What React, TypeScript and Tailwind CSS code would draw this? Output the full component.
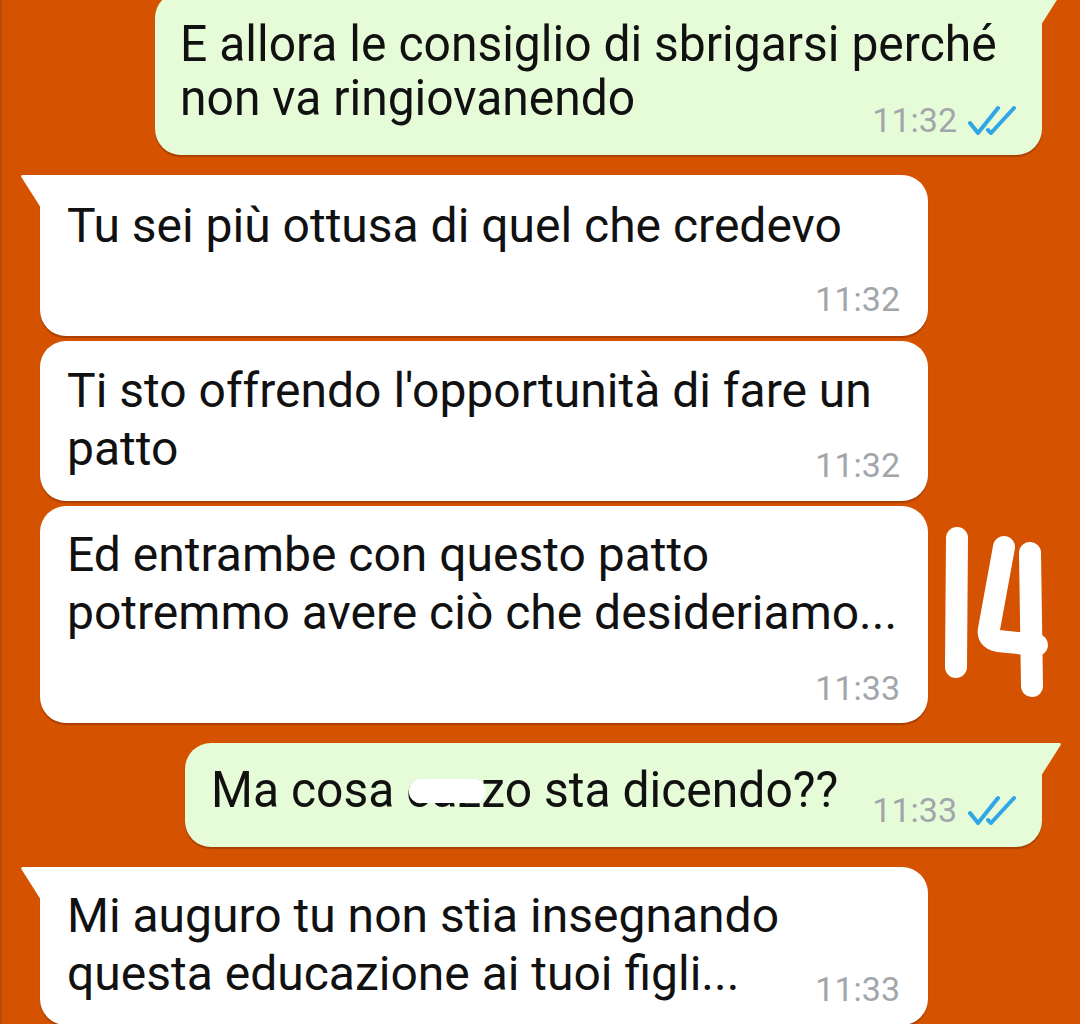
const sentLine = "font-['Roboto',sans-serif] text-[50px] leading-[54px] text-[#111] whitespace-nowrap origin-left scale-x-[0.96]"
const inLine = "font-['Roboto',sans-serif] text-[48px] leading-[58px] text-[#111] whitespace-nowrap"

function Ticks() {
  return (
    <svg width="50" height="30" viewBox="0 0 50 30" fill="none" stroke="#2fa6e6" strokeWidth="4" strokeLinecap="round" strokeLinejoin="round">
      <path d="M3 18 L11 28 L31 3" />
      <path d="M21 25 L24 28 L47 3" />
    </svg>
  )
}

function Time({ t, read, className = "" }: { t: string; read?: boolean; className?: string }) {
  return (
    <div className={`flex items-center gap-[10px] shrink-0 ${className}`}>
      <span className="font-['Roboto',sans-serif] text-[34px] leading-[40px] text-[#a2a6aa]">{t}</span>
      {read && <Ticks />}
    </div>
  )
}

function TailLeft() {
  return (
    <svg className="absolute left-[-20px] top-0" width="21" height="33" viewBox="0 0 21 33">
      <path d="M21 0 H3 Q0 0 1.8 2.8 L21 33 Z" fill="#ffffff" />
    </svg>
  )
}

function TailRight({ fill }: { fill: string }) {
  return (
    <svg className="absolute right-[-20px] top-0" width="21" height="33" viewBox="0 0 21 33">
      <path d="M0 0 H18 Q21 0 19.2 2.8 L0 33 Z" fill={fill} />
    </svg>
  )
}

const bubbleShadow = "shadow-[0_2px_1px_rgba(90,30,0,0.35)]"

export default function App() {
  return (
    <div className="relative w-[1080px] h-[1024px] overflow-hidden bg-[#d45200] border-l-2 border-[#b84a12]">
      <div className="flex flex-col">
        {/* sent 1 */}
        <div className={`relative self-end mr-[38px] mt-[-8px] w-[887px] rounded-[26px] rounded-tr-none bg-[#e6fcd8] pl-[25px] pr-[25px] pt-[25px] pb-[15px] ${bubbleShadow}`}>
          <TailRight fill="#e6fcd8" />
          <div className={sentLine}>E allora le consiglio di sbrigarsi perché</div>
          <div className="flex items-start justify-between">
            <div className={sentLine}>non va ringiovanendo</div>
            <Time t="11:32" read className="mt-[29px]" />
          </div>
        </div>

        {/* incoming 1 */}
        <div className={`relative ml-[38px] mt-[20px] w-[888px] rounded-[26px] rounded-tl-none bg-white pl-[27px] pr-[28px] pt-[22px] pb-[17px] ${bubbleShadow}`}>
          <TailLeft />
          <div className={inLine}>Tu sei più ottusa di quel che credevo</div>
          <div className="flex justify-end mt-[24px]">
            <Time t="11:32" />
          </div>
        </div>

        {/* incoming 2 */}
        <div className={`ml-[38px] mt-[5px] w-[888px] rounded-[26px] bg-white pl-[27px] pr-[28px] pt-[21px] pb-[16px] ${bubbleShadow}`}>
          <div className={inLine}>Ti sto offrendo l'opportunità di fare un</div>
          <div className="flex items-start justify-between">
            <div className={inLine}>patto</div>
            <Time t="11:32" className="mt-[25px]" />
          </div>
        </div>

        {/* incoming 3 */}
        <div className={`ml-[38px] mt-[5px] w-[888px] rounded-[26px] bg-white pl-[27px] pr-[28px] pt-[20px] pb-[15px] ${bubbleShadow}`}>
          <div className={inLine}>Ed entrambe con questo patto</div>
          <div className={inLine}>potremmo avere ciò che desideriamo...</div>
          <div className="flex justify-end mt-[26px]">
            <Time t="11:33" />
          </div>
        </div>

        {/* sent 2 */}
        <div className={`relative self-end mr-[38px] mt-[20px] w-[857px] rounded-[26px] rounded-tr-none bg-[#e6fcd8] pl-[26px] pr-[25px] pt-[20px] pb-[17px] ${bubbleShadow}`}>
          <TailRight fill="#e6fcd8" />
          <div className="flex items-start justify-between">
            <div className={sentLine}>
              Ma cosa{" "}
              <span className="relative">
                caz
                <span className="absolute left-[3px] right-[-4px] top-[18px] h-[24px] rounded-full bg-white" />
              </span>
              zo sta dicendo??
            </div>
            <Time t="11:33" read className="mt-[27px]" />
          </div>
        </div>

        {/* incoming 4 */}
        <div className={`relative ml-[38px] mt-[20px] w-[888px] rounded-[26px] rounded-tl-none bg-white pl-[27px] pr-[28px] pt-[20px] pb-[16px] ${bubbleShadow}`}>
          <TailLeft />
          <div className={inLine}>Mi auguro tu non stia insegnando</div>
          <div className="flex items-start justify-between">
            <div className={inLine}>questa educazione ai tuoi figli...</div>
            <Time t="11:33" className="mt-[24px]" />
          </div>
        </div>
      </div>

      {/* handwritten 14 */}
      <svg className="absolute left-[930px] top-[525px]" width="130" height="180" viewBox="0 0 130 180" fill="none" stroke="#ffffff" strokeWidth="22" strokeLinecap="round" strokeLinejoin="round">
        <path d="M25 13 L24 142" />
        <path d="M72 22 L57 104 Q55 114 66 116 L105 120" />
        <path d="M98 28 L100 161" />
      </svg>
    </div>
  )
}
